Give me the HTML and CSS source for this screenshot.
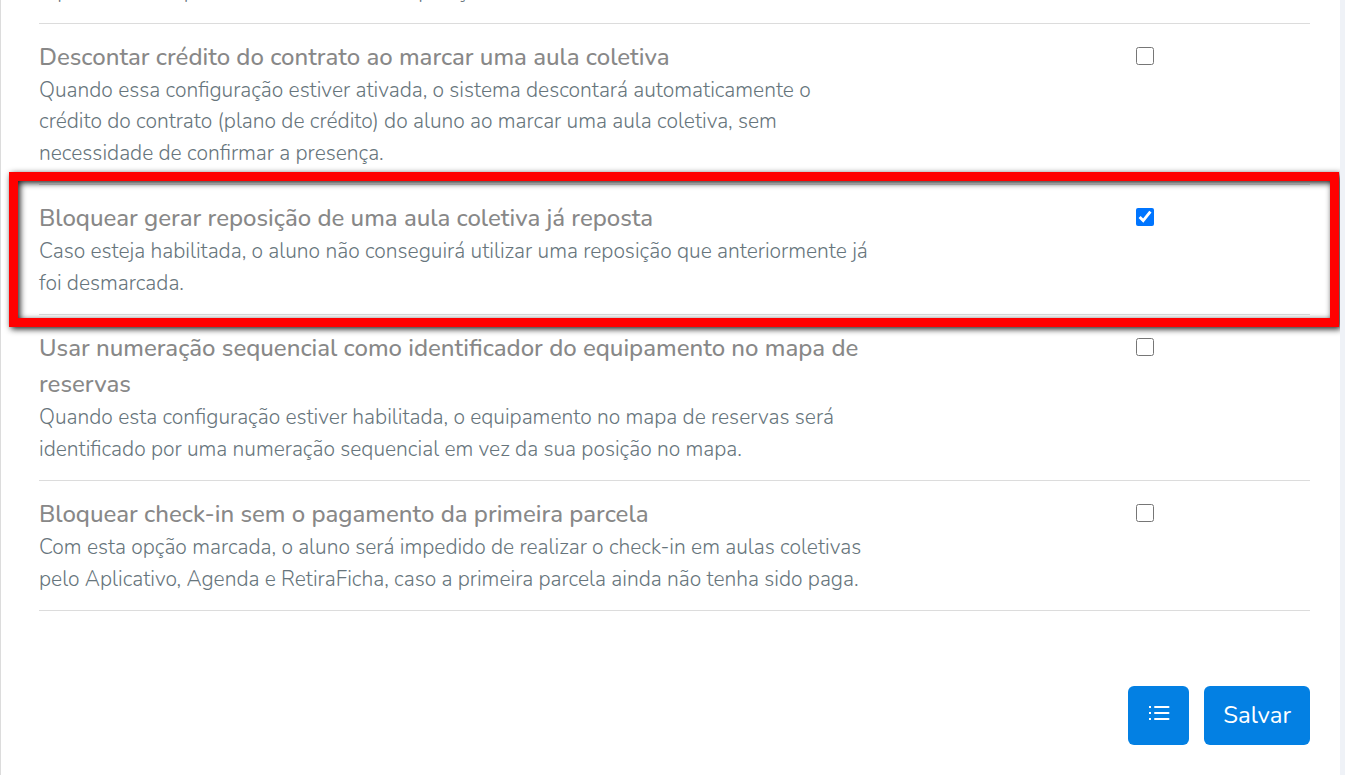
FILE: index.html
```html
<!DOCTYPE html>
<html lang="pt-BR">
<head>
<meta charset="utf-8">
<meta name="viewport" content="width=device-width, initial-scale=1">
<title>Configurações de aulas</title>
<link rel="stylesheet" href="styles.css">
</head>
<body>
<main class="panel">
  <form class="settings">
    <div class="setting setting-scrolled">
      <p class="description">repor uma aula pelo sistema sem nova reposição.</p>
    </div>
    <div class="setting">
      <div class="text">
        <label class="title" for="credit">Descontar crédito do contrato ao marcar uma aula coletiva</label>
        <p class="description" id="credit-help">Quando essa configuração estiver ativada, o sistema descontará automaticamente o crédito do contrato (plano de crédito) do aluno ao marcar uma aula coletiva, sem necessidade de confirmar a presença.</p>
      </div>
      <input class="check" type="checkbox" id="credit" aria-describedby="credit-help">
    </div>
    <div class="setting setting-highlighted">
      <div class="text">
        <label class="title" for="replacement">Bloquear gerar reposição de uma aula coletiva já reposta</label>
        <p class="description" id="replacement-help">Caso esteja habilitada, o aluno não conseguirá utilizar uma reposição que anteriormente já foi desmarcada.</p>
      </div>
      <input class="check" type="checkbox" id="replacement" aria-describedby="replacement-help" checked>
    </div>
    <div class="setting">
      <div class="text">
        <label class="title" for="numbering">Usar numeração sequencial como identificador do equipamento no mapa de reservas</label>
        <p class="description" id="numbering-help">Quando esta configuração estiver habilitada, o equipamento no mapa de reservas será identificado por uma numeração sequencial em vez da sua posição no mapa.</p>
      </div>
      <input class="check" type="checkbox" id="numbering" aria-describedby="numbering-help">
    </div>
    <div class="setting">
      <div class="text">
        <label class="title" for="checkin">Bloquear check-in sem o pagamento da primeira parcela</label>
        <p class="description" id="checkin-help">Com esta opção marcada, o aluno será impedido de realizar o check-in em aulas coletivas pelo Aplicativo, Agenda e RetiraFicha, caso a primeira parcela ainda não tenha sido paga.</p>
      </div>
      <input class="check" type="checkbox" id="checkin" aria-describedby="checkin-help">
    </div>
    <div class="actions">
      <button class="button button-icon" type="button" aria-label="Histórico">
        <svg class="icon" viewBox="0 0 21 16" aria-hidden="true">
          <path d="M0 1h2v2H0zM0 7h2v2H0zM0 13h2v2H0z"/>
          <path d="M6 1h13.500a1 1 0 0 1 0 2H6a1 1 0 0 1 0-2zM6 7h13.500a1 1 0 0 1 0 2H6a1 1 0 0 1 0-2zM6 13h13.500a1 1 0 0 1 0 2H6a1 1 0 0 1 0-2z"/>
        </svg>
      </button>
      <button class="button" type="submit">Salvar</button>
    </div>
  </form>
</main>
</body>
</html>
```

FILE: styles.css
```css
* {
  box-sizing: border-box;
}

body {
  margin: 0;
  background: #eff2f7;
  font-family: Nunito, Lato, "Open Sans", sans-serif;
}

.panel {
  min-height: 100vh;
  margin-right: 5px;
  padding: 0 30px 30px 38px;
  border-left: 1px solid #dcdcdc;
  background: #fff;
  overflow: hidden;
}

.setting {
  position: relative;
  display: grid;
  grid-template-columns: 74% 26%;
  align-items: start;
  padding: 15px 0;
  border-bottom: 1px solid #dcdcdc;
}

.setting-scrolled {
  margin-top: -39px;
}

.setting-highlighted::after {
  content: "";
  position: absolute;
  inset: -13px -29px -13px -30px;
  border: 9px solid #f00;
  filter: drop-shadow(2px 2px 3px rgba(0, 0, 0, 0.9));
  pointer-events: none;
}

.text {
  padding-right: 110px;
}

.title {
  display: block;
  color: #888;
  font-size: 24px;
  font-weight: 500;
  line-height: 36px;
}

.description {
  margin: 0;
  color: #67757c;
  font-size: 21px;
  font-weight: 300;
  line-height: 1.5;
}

.check {
  width: 18px;
  height: 18px;
  margin: 8px 0 0;
  justify-self: center;
}

.actions {
  display: flex;
  justify-content: flex-end;
  gap: 15px;
  margin-top: 75px;
}

.button {
  display: flex;
  align-items: center;
  justify-content: center;
  height: 59px;
  padding: 0 19px 2px;
  border: 0;
  border-radius: 6px;
  background: #0380e3;
  color: #fff;
  font: inherit;
  font-size: 24px;
}

.button-icon {
  padding: 0 19px 5px 21px;
}

.icon {
  width: 21px;
  height: 16px;
  fill: currentColor;
}
```
